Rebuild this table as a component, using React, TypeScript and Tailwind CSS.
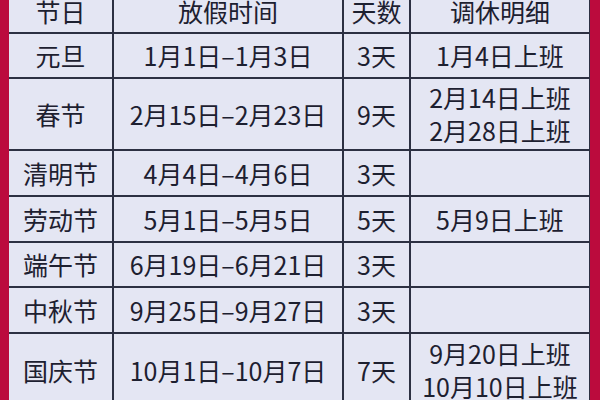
import React from "react";

const rows: { name: string; range: string; days: string; note: string[]; h: string }[] = [
  { name: "元旦", range: "1月1日–1月3日", days: "3天", note: ["1月4日上班"], h: "h-[43px]" },
  { name: "春节", range: "2月15日–2月23日", days: "9天", note: ["2月14日上班", "2月28日上班"], h: "h-[70px]" },
  { name: "清明节", range: "4月4日–4月6日", days: "3天", note: [], h: "h-[44px]" },
  { name: "劳动节", range: "5月1日–5月5日", days: "5天", note: ["5月9日上班"], h: "h-[44px]" },
  { name: "端午节", range: "6月19日–6月21日", days: "3天", note: [], h: "h-[43px]" },
  { name: "中秋节", range: "9月25日–9月27日", days: "3天", note: [], h: "h-[44px]" },
  { name: "国庆节", range: "10月1日–10月7日", days: "7天", note: ["9月20日上班", "10月10日上班"], h: "h-[72px]" },
];

function Cell({ children, h }: { children?: React.ReactNode; h: string }) {
  return (
    <div className={`${h} bg-[#e4e6f3] flex flex-col items-center justify-center leading-[33px] whitespace-nowrap`}>
      {children}
    </div>
  );
}

export default function App() {
  return (
    <div
      className="w-[600px] h-[400px] overflow-hidden bg-[#bb0b3d] pl-[9px] pr-[10px] text-[25px] text-[#1d2030]"
      style={{ fontFamily: '"Noto Sans CJK SC", "Noto Sans", sans-serif' }}
    >
      <div className="-mt-[10px] grid grid-cols-[103px_228px_65px_178px] gap-[2px] bg-[#2c3042] border-r border-[#2c3042]">
        <Cell h="h-[42px]">节日</Cell>
        <Cell h="h-[42px]">放假时间</Cell>
        <Cell h="h-[42px]">天数</Cell>
        <Cell h="h-[42px]">调休明细</Cell>
        {rows.map((r) => (
          <React.Fragment key={r.name}>
            <Cell h={r.h}>{r.name}</Cell>
            <Cell h={r.h}>{r.range}</Cell>
            <Cell h={r.h}>{r.days}</Cell>
            <Cell h={r.h}>
              {r.note.map((n) => (
                <span key={n}>{n}</span>
              ))}
            </Cell>
          </React.Fragment>
        ))}
      </div>
    </div>
  );
}
